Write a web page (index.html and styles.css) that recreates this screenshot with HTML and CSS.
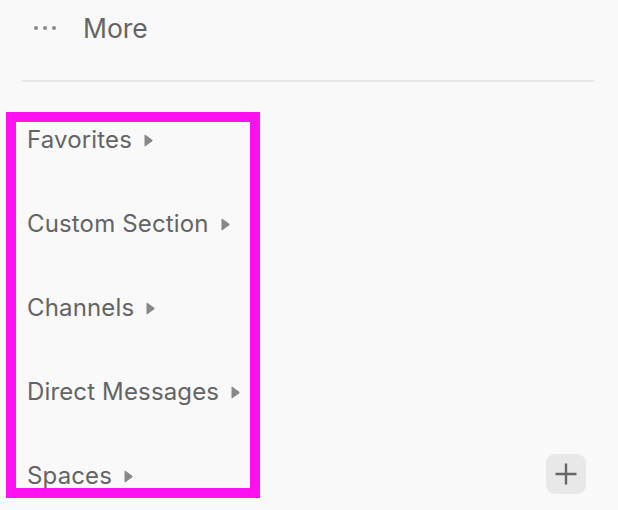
FILE: index.html
```html
<!DOCTYPE html>
<html>
<head>
<meta charset="utf-8">
<link rel="stylesheet" href="styles.css">
</head>
<body>
<div class="sidebar">
  <div class="more-row">
    <svg class="dots" width="24" height="6" viewBox="0 0 24 6"><circle cx="3" cy="3" r="2" fill="#8a8a8a"/><circle cx="12" cy="3" r="2" fill="#8a8a8a"/><circle cx="21" cy="3" r="2" fill="#8a8a8a"/></svg>
    <span class="more-label">More</span>
  </div>
  <div class="divider"></div>
  <div class="bottom">
    <div class="sections">
      <div class="section"><span>Favorites</span><svg class="caret" width="9" height="13" viewBox="0 0 9 13"><path d="M0.5 1.6 Q0.5 0.2 1.7 1 L8.2 5.7 Q9 6.5 8.2 7.3 L1.7 12 Q0.5 12.8 0.5 11.4 Z" fill="#888"/></svg></div>
      <div class="section"><span>Custom Section</span><svg class="caret" width="9" height="13" viewBox="0 0 9 13"><path d="M0.5 1.6 Q0.5 0.2 1.7 1 L8.2 5.7 Q9 6.5 8.2 7.3 L1.7 12 Q0.5 12.8 0.5 11.4 Z" fill="#888"/></svg></div>
      <div class="section"><span>Channels</span><svg class="caret" width="9" height="13" viewBox="0 0 9 13"><path d="M0.5 1.6 Q0.5 0.2 1.7 1 L8.2 5.7 Q9 6.5 8.2 7.3 L1.7 12 Q0.5 12.8 0.5 11.4 Z" fill="#888"/></svg></div>
      <div class="section"><span>Direct Messages</span><svg class="caret" width="9" height="13" viewBox="0 0 9 13"><path d="M0.5 1.6 Q0.5 0.2 1.7 1 L8.2 5.7 Q9 6.5 8.2 7.3 L1.7 12 Q0.5 12.8 0.5 11.4 Z" fill="#888"/></svg></div>
      <div class="section"><span>Spaces</span><svg class="caret" width="9" height="13" viewBox="0 0 9 13"><path d="M0.5 1.6 Q0.5 0.2 1.7 1 L8.2 5.7 Q9 6.5 8.2 7.3 L1.7 12 Q0.5 12.8 0.5 11.4 Z" fill="#888"/></svg></div>
    </div>
    <button class="add-btn"><svg width="22" height="22" viewBox="0 0 22 22"><path d="M11 0.5 V21.5 M0.5 11 H21.5" stroke="#666" stroke-width="2.4" stroke-linecap="butt"/></svg></button>
  </div>
</div>
</body>
</html>
```

FILE: styles.css
```css
html, body {
  margin: 0;
  padding: 0;
  background: #f9f9f9;
}
body {
  width: 618px;
  height: 510px;
  overflow: hidden;
  font-family: Inter, "Noto Sans", sans-serif;
  color: #646464;
}
.sidebar {
  display: flex;
  flex-direction: column;
}
.more-row {
  display: flex;
  align-items: center;
  height: 56px;
  padding-left: 33px;
}
.dots {
  display: block;
  margin-right: 26px;
}
.more-label {
  font-size: 26.5px;
  line-height: 30px;
}
.divider {
  height: 2px;
  background: #e6e6e6;
  margin: 24px 24px 0 22px;
}
.bottom {
  display: flex;
  align-items: flex-end;
  margin-top: 30px;
}
.sections {
  box-sizing: border-box;
  width: 254px;
  height: 386px;
  margin-left: 6px;
  border: 10px solid #ff10f0;
  padding: 3px 0 0 11px;
  display: flex;
  flex-direction: column;
  gap: 54px;
  overflow: hidden;
}
.section {
  display: flex;
  align-items: center;
  gap: 12px;
  font-size: 24px;
  letter-spacing: 0.15px;
  line-height: 30px;
  height: 30px;
  flex-shrink: 0;
  white-space: nowrap;
}
.caret {
  display: block;
}
.add-btn {
  margin-left: auto;
  margin-right: 32px;
  margin-bottom: 4px;
  width: 40px;
  height: 40px;
  border: none;
  border-radius: 9px;
  background: #e8e8e8;
  display: flex;
  align-items: center;
  justify-content: center;
  padding: 0;
}
.add-btn svg {
  display: block;
}
```
